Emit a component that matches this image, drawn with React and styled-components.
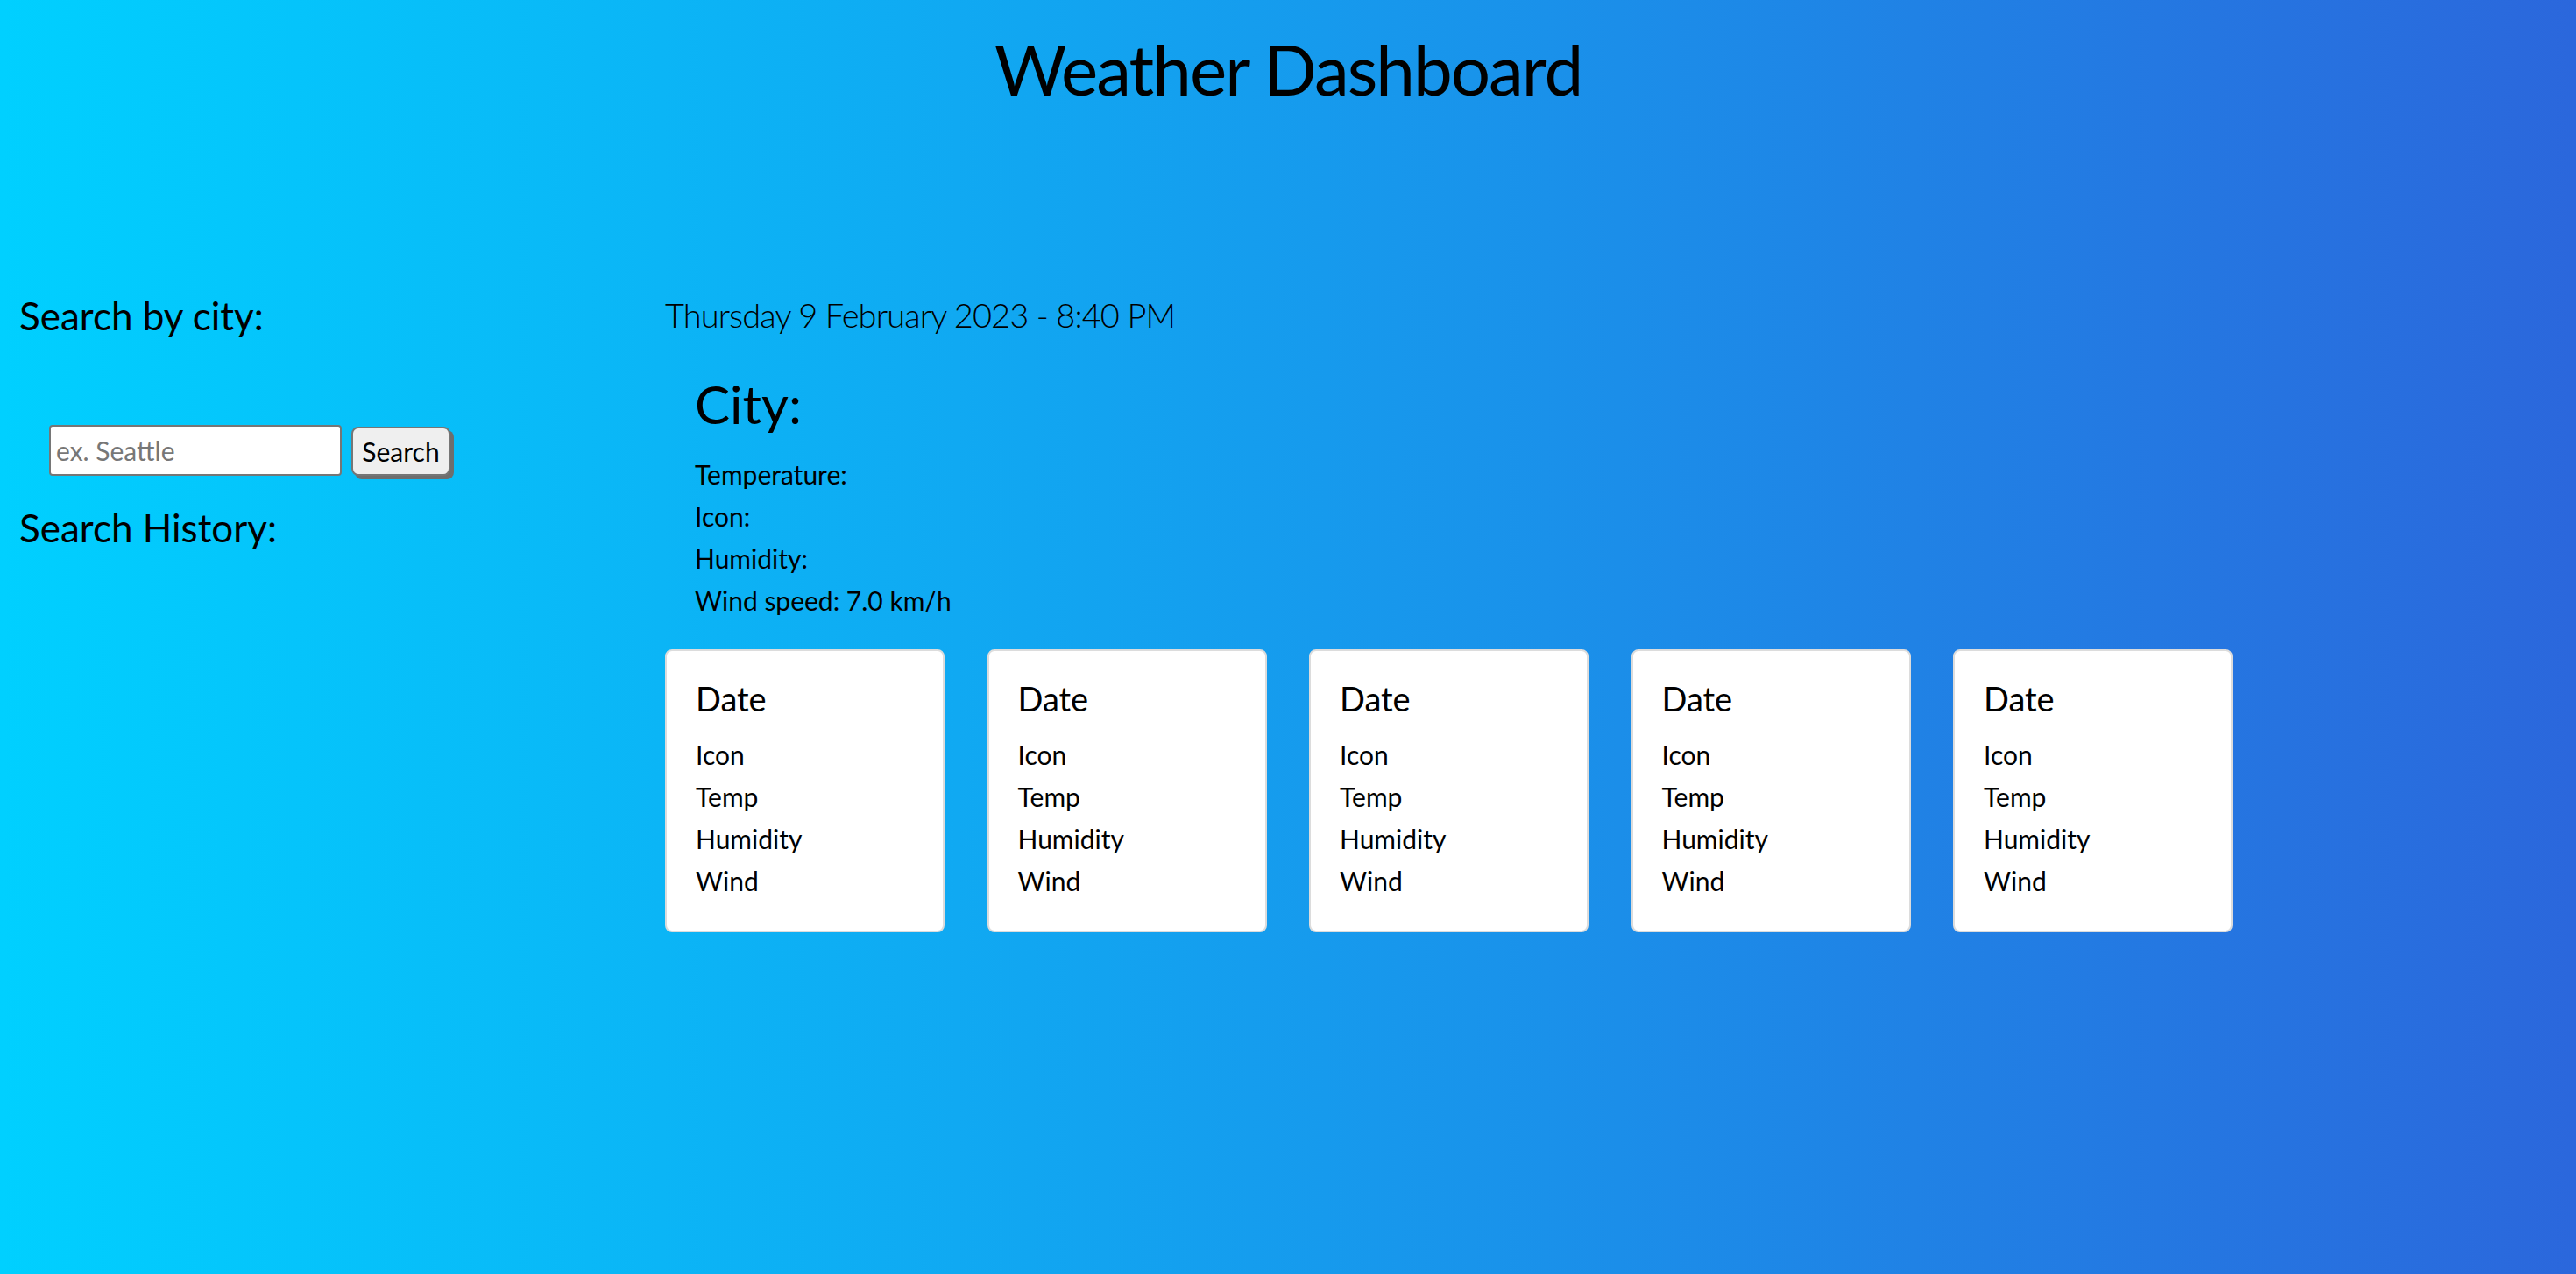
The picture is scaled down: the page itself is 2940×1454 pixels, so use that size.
import React from "react";
import styled, { createGlobalStyle } from "styled-components";

const Global = createGlobalStyle`
  html, body { margin: 0; padding: 0; }
  body {
    min-height: 1454px;
    background: linear-gradient(to right, #00d0ff 0%, #2b67dc 100%);
    font-family: Lato, "Open Sans", sans-serif;
    color: #000;
  }
`;

const Page = styled.div`
  min-height: 1454px;
  display: flex;
  flex-direction: column;
`;

const Title = styled.h1`
  margin: 30px 0 0;
  font-size: 80px;
  line-height: 96px;
  letter-spacing: -2px;
  font-weight: 400;
  text-align: center;
`;

const Row = styled.div`
  display: flex;
  margin-top: 207px;
`;

const Aside = styled.aside`
  width: 759px;
  flex: none;
  padding-left: 22px;
  box-sizing: border-box;
  display: flex;
  flex-direction: column;
`;

const SideHeading = styled.h2`
  margin: ${(p) => p.$mt || 0}px 0 0;
  font-size: 44px;
  line-height: 55px;
  font-weight: 400;
`;

const SearchRow = styled.form`
  display: flex;
  align-items: flex-start;
  gap: 11px;
  margin: 97px 0 0 34px;
`;

const Input = styled.input`
  width: 334px;
  height: 58px;
  box-sizing: border-box;
  border: 2px solid #767676;
  border-radius: 4px;
  padding: 0 6px;
  font-family: inherit;
  font-size: 30px;
  background: #fff;
  &::placeholder { color: #777; }
`;

const Button = styled.button`
  margin-top: 2px;
  width: 113px;
  height: 56px;
  box-sizing: border-box;
  border: 2px solid #767676;
  border-radius: 8px;
  background: #efefef;
  box-shadow: 4px 4px 0 #6e6e6e;
  font-family: inherit;
  font-size: 30px;
  color: #000;
  padding: 0;
`;

const Main = styled.main`
  flex: 1;
  display: flex;
  flex-direction: column;
`;

const DateLine = styled.div`
  font-size: 38px;
  line-height: 53px;
  letter-spacing: -0.9px;
  font-weight: 300;
`;

const Current = styled.section`
  margin: 36px 0 0 34px;
`;

const CityName = styled.h1`
  margin: 0 0 17px;
  font-size: 60px;
  line-height: 78px;
  font-weight: 400;
`;

const InfoLine = styled.p`
  margin: 0;
  font-size: 30px;
  line-height: 48px;
`;

const Cards = styled.div`
  display: flex;
  gap: 48.5px;
  margin-top: 32px;
`;

const Card = styled.div`
  width: 319px;
  height: 323px;
  box-sizing: border-box;
  background: #fff;
  border: 2px solid #dcdcdc;
  border-radius: 8px;
  padding: 30px 0 0 33px;
`;

const CardDate = styled.h3`
  margin: 0 0 16px;
  font-size: 38px;
  line-height: 48px;
  font-weight: 400;
`;

const CardLine = styled.p`
  margin: 0;
  font-size: 30px;
  line-height: 48px;
`;

export default function App() {
  return (
    <Page>
      <Global />
      <Title>Weather Dashboard</Title>
      <Row>
        <Aside>
          <SideHeading>Search by city:</SideHeading>
          <SearchRow onSubmit={(e) => e.preventDefault()}>
            <Input placeholder="ex. Seattle" />
            <Button type="submit">Search</Button>
          </SearchRow>
          <SideHeading $mt={32}>Search History:</SideHeading>
        </Aside>
        <Main>
          <DateLine>Thursday 9 February 2023 - 8:40 PM</DateLine>
          <Current>
            <CityName>City:</CityName>
            <InfoLine>Temperature:</InfoLine>
            <InfoLine>Icon:</InfoLine>
            <InfoLine>Humidity:</InfoLine>
            <InfoLine>Wind speed: 7.0 km/h</InfoLine>
          </Current>
          <Cards>
            {[0, 1, 2, 3, 4].map((i) => (
              <Card key={i}>
                <CardDate>Date</CardDate>
                <CardLine>Icon</CardLine>
                <CardLine>Temp</CardLine>
                <CardLine>Humidity</CardLine>
                <CardLine>Wind</CardLine>
              </Card>
            ))}
          </Cards>
        </Main>
      </Row>
    </Page>
  );
}
